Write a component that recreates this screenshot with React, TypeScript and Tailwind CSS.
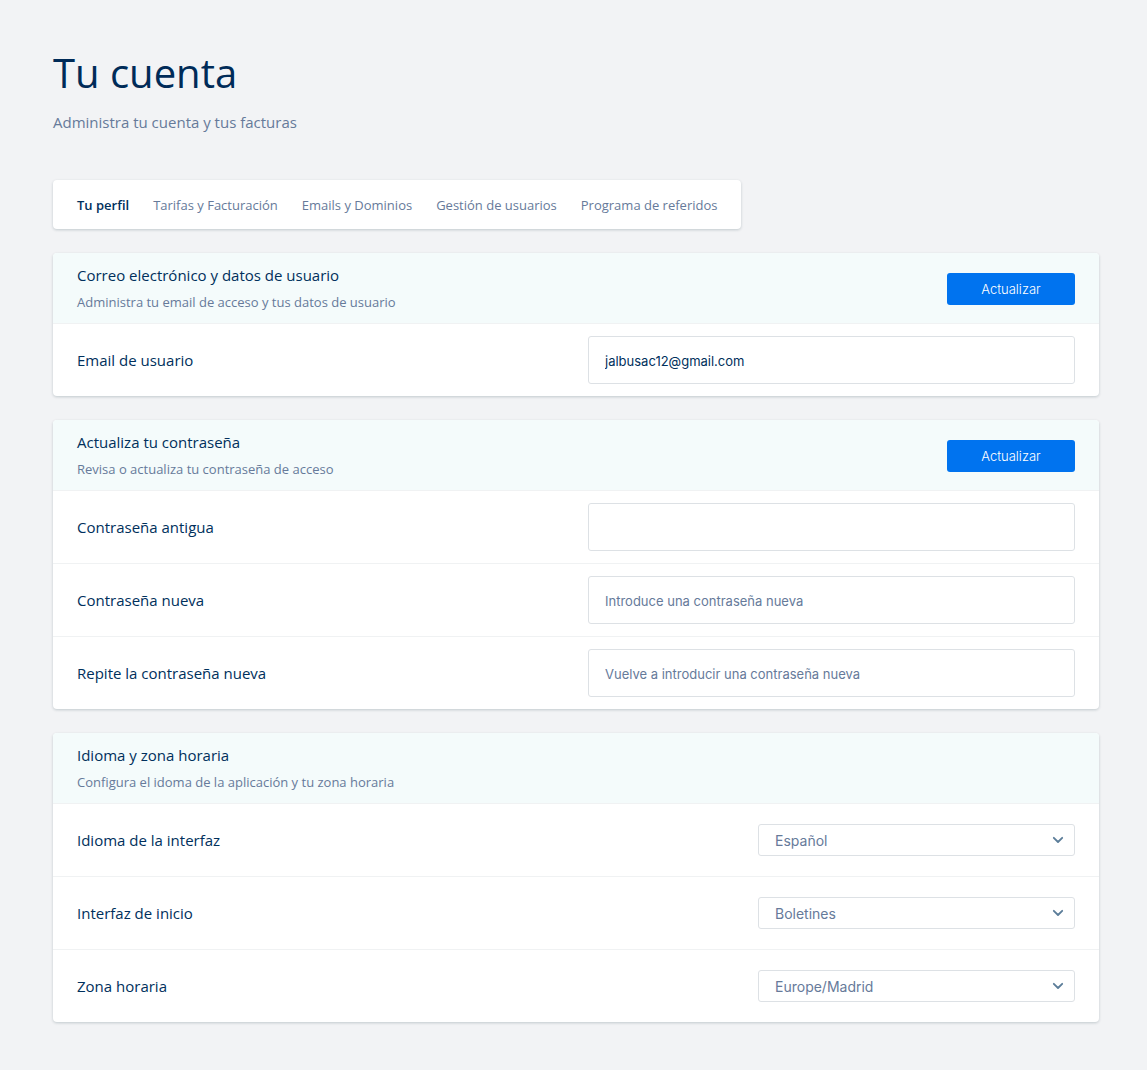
import React from 'react';

const tabs = [
  { label: 'Tu perfil', active: true },
  { label: 'Tarifas y Facturación', active: false },
  { label: 'Emails y Dominios', active: false },
  { label: 'Gestión de usuarios', active: false },
  { label: 'Programa de referidos', active: false },
];

type SectionProps = {
  title: string;
  desc: string;
  action?: string;
  children: React.ReactNode;
};

const Section = ({ title, desc, action, children }: SectionProps) => (
  <section className="mt-6 overflow-hidden rounded-sm bg-white shadow-[0_1px_3px_rgba(0,40,50,0.2)]">
    <header className="flex items-center justify-between bg-[#f4fbfb] px-6 pt-[9px] pb-[7px]">
      <div>
        <h2 className="text-[15px] leading-[26px] text-[#00305c]">{title}</h2>
        <p className="text-[13px] leading-7 text-[#667a9a]">{desc}</p>
      </div>
      {action && (
        <button type="button" className="h-8 w-32 rounded-[3px] bg-[#0073ef] pt-0.5 font-['Inter',sans-serif] text-[13px] font-light text-white">
          {action}
        </button>
      )}
    </header>
    {children}
  </section>
);

const Row = ({ id, label, children }: { id: string; label: string; children: React.ReactNode }) => (
  <div className="flex h-[73px] items-center border-t border-[#f0f2f3] px-6">
    <label htmlFor={id} className="flex-1 text-[15px] text-[#00305c]">
      {label}
    </label>
    {children}
  </div>
);

const TextField = (props: React.InputHTMLAttributes<HTMLInputElement>) => (
  <input
    {...props}
    className="h-12 w-[calc(50%-12px)] rounded-[3px] border border-[#dde1e5] bg-white px-4 pt-0.5 font-['Inter',sans-serif] text-[13px] text-[#00305c] placeholder:text-[#667a9a]"
  />
);

const SelectField = ({ id, value }: { id: string; value: string }) => (
  <div className="relative w-[317px]">
    <select
      id={id}
      defaultValue={value}
      className="h-8 w-full appearance-none rounded-[3px] border border-[#dde1e5] bg-white px-4 pt-0.5 font-['Inter',sans-serif] text-sm text-[#667a9a]"
    >
      <option>{value}</option>
    </select>
    <svg
      viewBox="0 0 12 8"
      className="pointer-events-none absolute top-3 right-[11px] h-2 w-3"
      fill="none"
      stroke="#5b7d99"
      strokeWidth="1.8"
      strokeLinecap="round"
      strokeLinejoin="round"
    >
      <path d="M1.8 1.8 6 6l4.2-4.2" />
    </svg>
  </div>
);

export default function App() {
  return (
    <main className="min-h-screen bg-[#f2f3f5] pt-12 pr-12 pb-12 pl-[53px] font-['Open_Sans',sans-serif]">
      <h1 className="text-[40px] leading-[50px] text-[#002b58]">Tu cuenta</h1>
      <p className="mt-3 text-[15px] leading-6 text-[#667a9a]">Administra tu cuenta y tus facturas</p>

      <nav className="mt-[46px] flex w-fit gap-6 rounded-sm bg-white px-6 pt-[15px] pb-[13px] text-[13px] leading-[21px] shadow-[0_1px_3px_rgba(0,40,50,0.2)]">
        {tabs.map((tab) => (
          <a key={tab.label} href="#" className={tab.active ? 'font-semibold text-[#00305c]' : 'text-[#667a9a]'}>
            {tab.label}
          </a>
        ))}
      </nav>

      <Section title="Correo electrónico y datos de usuario" desc="Administra tu email de acceso y tus datos de usuario" action="Actualizar">
        <Row id="email" label="Email de usuario">
          <TextField id="email" type="email" defaultValue="jalbusac12@gmail.com" />
        </Row>
      </Section>

      <Section title="Actualiza tu contraseña" desc="Revisa o actualiza tu contraseña de acceso" action="Actualizar">
        <Row id="old-password" label="Contraseña antigua">
          <TextField id="old-password" type="password" />
        </Row>
        <Row id="new-password" label="Contraseña nueva">
          <TextField id="new-password" type="password" placeholder="Introduce una contraseña nueva" />
        </Row>
        <Row id="repeat-password" label="Repite la contraseña nueva">
          <TextField id="repeat-password" type="password" placeholder="Vuelve a introducir una contraseña nueva" />
        </Row>
      </Section>

      <Section title="Idioma y zona horaria" desc="Configura el idoma de la aplicación y tu zona horaria">
        <Row id="language" label="Idioma de la interfaz">
          <SelectField id="language" value="Español" />
        </Row>
        <Row id="home" label="Interfaz de inicio">
          <SelectField id="home" value="Boletines" />
        </Row>
        <Row id="timezone" label="Zona horaria">
          <SelectField id="timezone" value="Europe/Madrid" />
        </Row>
      </Section>
    </main>
  );
}
